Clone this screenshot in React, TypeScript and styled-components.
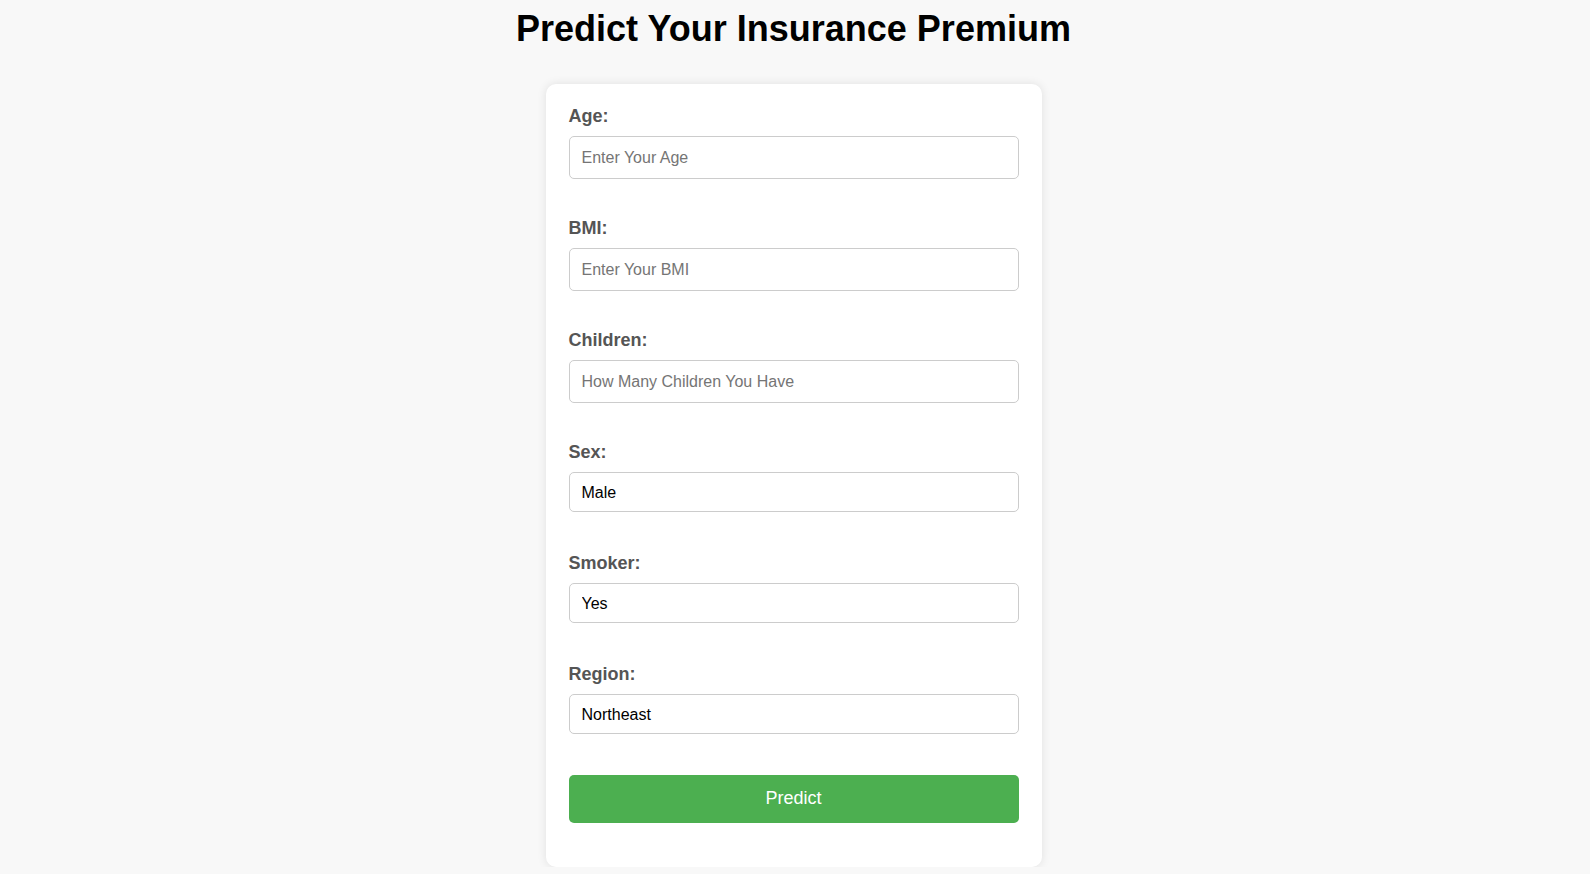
import React from "react";
import styled, { createGlobalStyle } from "styled-components";

const GlobalStyle = createGlobalStyle`
  html, body {
    margin: 0;
    padding: 0;
    background: #f8f8f8;
    font-family: "Liberation Sans", Arial, sans-serif;
  }
  * { box-sizing: border-box; }
`;

const Page = styled.main`
  display: flex;
  flex-direction: column;
  align-items: center;
  padding-right: 3px;
`;

const Title = styled.h1`
  margin: 8px 0 35px;
  font-size: 36px;
  line-height: 41px;
  font-weight: 700;
  color: #000;
`;

const Card = styled.form`
  width: 496px;
  padding: 22px 23px 44px;
  background: #fff;
  border-radius: 10px;
  box-shadow: 0 0 10px rgba(0, 0, 0, 0.1);
  display: flex;
  flex-direction: column;
`;

const Field = styled.div`
  display: flex;
  flex-direction: column;
  gap: 9px;
`;

const Label = styled.label`
  font-size: 18px;
  line-height: 21px;
  font-weight: 700;
  color: #555;
`;

const TextInput = styled.input`
  width: 100%;
  height: 43px;
  margin: 0 0 39px;
  padding: 0 12px;
  border: 1px solid #ccc;
  border-radius: 5px;
  background: #fff;
  font-family: "Liberation Sans", Arial, sans-serif;
  font-size: 16px;
  color: #000;
  outline: none;
  &::placeholder {
    color: #757575;
  }
`;

const Select = styled.select`
  width: 100%;
  height: 40px;
  margin: 0 0 41px;
  padding: 0 12px;
  border: 1px solid #ccc;
  border-radius: 5px;
  background: #fff;
  font-family: "Liberation Sans", Arial, sans-serif;
  font-size: 16px;
  color: #000;
  appearance: none;
  -webkit-appearance: none;
  outline: none;
`;

const Button = styled.button`
  margin-top: 0;
  width: 100%;
  height: 48px;
  border: none;
  border-radius: 5px;
  background: #4caf50;
  color: #fff;
  font-family: "Liberation Sans", Arial, sans-serif;
  font-size: 18px;
  line-height: 20px;
  padding: 0 0 2px;
  cursor: pointer;
`;

type TextFieldProps = { id: string; label: string; placeholder: string };

const TextField = ({ id, label, placeholder }: TextFieldProps) => (
  <Field>
    <Label htmlFor={id}>{label}</Label>
    <TextInput id={id} type="text" inputMode="decimal" placeholder={placeholder} />
  </Field>
);

type SelectFieldProps = { id: string; label: string; options: string[] };

const SelectField = ({ id, label, options }: SelectFieldProps) => (
  <Field>
    <Label htmlFor={id}>{label}</Label>
    <Select id={id} defaultValue={options[0]}>
      {options.map((o) => (
        <option key={o} value={o}>
          {o}
        </option>
      ))}
    </Select>
  </Field>
);

export default function App() {
  return (
    <>
      <GlobalStyle />
      <Page>
        <Title>Predict Your Insurance Premium</Title>
        <Card onSubmit={(e) => e.preventDefault()}>
          <TextField id="age" label="Age:" placeholder="Enter Your Age" />
          <TextField id="bmi" label="BMI:" placeholder="Enter Your BMI" />
          <TextField id="children" label="Children:" placeholder="How Many Children You Have" />
          <SelectField id="sex" label="Sex:" options={["Male", "Female"]} />
          <SelectField id="smoker" label="Smoker:" options={["Yes", "No"]} />
          <SelectField
            id="region"
            label="Region:"
            options={["Northeast", "Northwest", "Southeast", "Southwest"]}
          />
          <Button type="submit">Predict</Button>
        </Card>
      </Page>
    </>
  );
}
